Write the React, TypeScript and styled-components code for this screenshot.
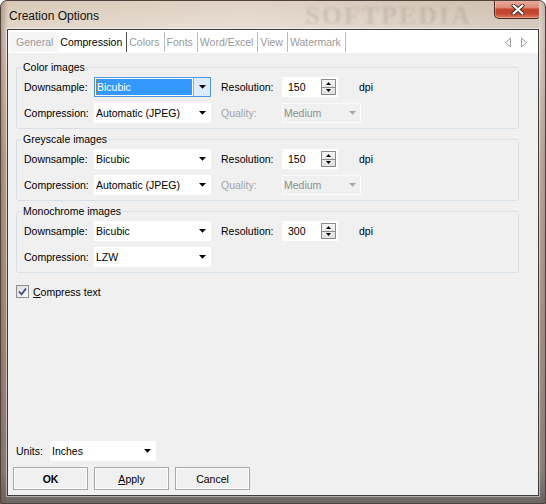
import styled, { createGlobalStyle } from "styled-components";

const GlobalStyle = createGlobalStyle`
    html, body {
        margin: 0;
        padding: 0;
        background: #ffffff;
    }
    body {
        font-family: "Liberation Sans", Arial, sans-serif;
        font-size: 10.5px;
        color: #000;
    }
`

const Window = styled.div`
    width: 546px;
    height: 504px;
    box-sizing: border-box;
    display: flex;
    flex-direction: column;
    padding: 0 6px 7px 6px;
    border: 1px solid #4d433c;
    border-radius: 7px 7px 0 0;
    overflow: hidden;
    background:
        linear-gradient(90deg, rgba(110, 70, 50, 0.4) 0px, rgba(110, 70, 50, 0) 7px, rgba(0, 0, 0, 0) 538px, rgba(70, 70, 70, 0.25) 546px),
        linear-gradient(180deg, #d9c8b7 0px, #e3d7ca 28px, #c4ad9c 160px, #ad9585 330px, #8e8782 470px, #6a6663 504px);
`

const TitleBar = styled.div`
    height: 28px;
    display: flex;
    align-items: flex-start;
    overflow: hidden;
    background: linear-gradient(90deg, rgba(255, 255, 255, 0) 0%, rgba(255, 255, 255, 0.2) 45%, rgba(120, 115, 110, 0.12) 100%);
`

const Title = styled.div`
    margin: 8px 0 0 2px;
    font-size: 12px;
    line-height: 14px;
    color: #111;
`

const Watermark = styled.div`
    margin: 3px 22px 0 auto;
    font-family: "Liberation Serif", serif;
    font-weight: bold;
    font-size: 26px;
    line-height: 24px;
    letter-spacing: 2px;
    color: rgba(95, 85, 75, 0.15);
    filter: blur(1.2px);
    white-space: nowrap;
`

const CloseButton = styled.div`
    width: 47px;
    height: 19px;
    box-sizing: border-box;
    margin: -1px -2px 0 0;
    border: 1px solid #4a2720;
    border-top: none;
    border-radius: 0 0 5px 5px;
    background: linear-gradient(180deg, #eab0a2 0%, #dc8a76 42%, #c2442b 52%, #c34b33 78%, #e07b5e 100%);
    box-shadow: inset 0 0 0 1px rgba(255, 255, 255, 0.3);
    display: flex;
    align-items: center;
    justify-content: center;
    flex-shrink: 0;
`

const Client = styled.div`
    flex: 1;
    min-height: 0;
    display: flex;
    flex-direction: column;
    background: #f0f0f0;
    border: 1px solid #3d3d3d;
    box-shadow: 0 0 0 1px rgba(255, 255, 255, 0.45);
`

const TabStrip = styled.div`
    height: 23px;
    box-sizing: border-box;
    padding: 2px 10px 1px 2px;
    background: #ffffff;
    display: flex;
    align-items: stretch;
`

const Tab = styled.div<{ $active?: boolean; $first?: boolean }>`
    display: flex;
    align-items: center;
    padding: ${({ $first }) => ($first ? "0 5px 0 6px" : "0 4px 0 2px")};
    background: ${({ $first }) => ($first ? "#f5f5f5" : "#ffffff")};
    color: ${({ $active }) => ($active ? "#000" : "#9a9a9a")};
    border-right: ${({ $first, $active }) =>
        $first ? "none" : $active ? "1px solid #4a4a4a" : "1px solid #bcbcbc"};
    white-space: nowrap;
`

const TabArrows = styled.div`
    margin-left: auto;
    display: flex;
    align-items: center;
`

const Content = styled.div`
    flex: 1;
    display: flex;
    flex-direction: column;
    gap: 4px;
    padding: 8px 19px 0 8px;
`

const Group = styled.fieldset`
    margin: 0;
    padding: 3px 0 5px 7px;
    border: 1px solid #d5dfe5;
    border-radius: 3px;
    display: flex;
    flex-direction: column;
    gap: 6px;
    min-width: 0;
`

const GroupTitle = styled.legend`
    margin-left: -2px;
    padding: 0 1px;
    font-size: 10.5px;
    line-height: 13px;
`

const Row = styled.div`
    height: 20px;
    display: flex;
    align-items: center;
`

const FieldLabel = styled.span<{ $w: number; $gap?: number; $disabled?: boolean }>`
    width: ${({ $w }) => $w}px;
    margin-left: ${({ $gap }) => $gap ?? 0}px;
    flex-shrink: 0;
    color: ${({ $disabled }) => ($disabled ? "#a3a3a3" : "#000")};
    white-space: nowrap;
`

const ComboBox = styled.div<{ $w: number; $focused?: boolean; $disabled?: boolean }>`
    width: ${({ $w }) => $w}px;
    height: 20px;
    box-sizing: border-box;
    display: flex;
    flex-shrink: 0;
    background: ${({ $disabled }) => ($disabled ? "#f0f0f0" : "#ffffff")};
    border: 1px solid ${({ $focused, $disabled }) =>
        $focused ? "#4d97e2" : $disabled ? "#fbfbfb" : "#ffffff"};
    color: ${({ $disabled }) => ($disabled ? "#8e8e8e" : "#000")};
`

const ComboText = styled.div<{ $focused?: boolean }>`
    flex: 1;
    display: flex;
    align-items: center;
    padding-left: 1px;
    margin: ${({ $focused }) => ($focused ? "1px 0 1px 1px" : "0")};
    background: ${({ $focused }) => ($focused ? "#3399ff" : "transparent")};
    color: ${({ $focused }) => ($focused ? "#fff" : "inherit")};
    outline: ${({ $focused }) => ($focused ? "1px dotted #c07a20" : "none")};
    outline-offset: -1px;
    white-space: nowrap;
    overflow: hidden;
`

const ComboButton = styled.div<{ $focused?: boolean }>`
    width: 16px;
    flex-shrink: 0;
    display: flex;
    align-items: center;
    justify-content: center;
    margin-left: ${({ $focused }) => ($focused ? "1px" : "0")};
    background: ${({ $focused }) => ($focused ? "#dcecfc" : "transparent")};
    border-left: 1px solid ${({ $focused }) => ($focused ? "#7eb4ea" : "transparent")};
`

const SpinBox = styled.div`
    width: 56px;
    height: 20px;
    box-sizing: border-box;
    display: flex;
    align-items: center;
    padding: 0 2px 0 6px;
    background: #ffffff;
    flex-shrink: 0;
`

const SpinValue = styled.div`
    flex: 1;
`

const SpinButtons = styled.div`
    width: 15px;
    height: 16px;
    box-sizing: border-box;
    display: flex;
    flex-direction: column;
    border: 1px solid #8a8a8a;
    background: linear-gradient(180deg, #f6f6f6, #e2e2e2);
`

const SpinHalf = styled.div<{ $top?: boolean }>`
    flex: 1;
    display: flex;
    align-items: center;
    justify-content: center;
    border-bottom: ${({ $top }) => ($top ? "1px solid #8a8a8a" : "none")};
`

const Unit = styled.span`
    margin-left: 21px;
`

const CheckRow = styled.label`
    margin-top: 8px;
    display: flex;
    align-items: center;
    gap: 4px;
`

const CheckBox = styled.div`
    width: 13px;
    height: 13px;
    box-sizing: border-box;
    border: 1px solid #8e8f8f;
    background: linear-gradient(135deg, #dcdcdc, #fbfbfb);
    display: flex;
    align-items: center;
    justify-content: center;
`

const Footer = styled.div`
    display: flex;
    flex-direction: column;
    gap: 6px;
    padding: 0 0 5px 5px;
`

const UnitsRow = styled(Row)`
    margin-left: 3px;
`

const ButtonRow = styled.div`
    display: flex;
    gap: 6px;
`

const Button = styled.div<{ $default?: boolean }>`
    width: 75px;
    height: 23px;
    box-sizing: border-box;
    display: flex;
    align-items: center;
    justify-content: center;
    border: 1px solid #a8a8a8;
    background: #f0f0f0;
    box-shadow: inset 0 0 0 1px #fafafa;
    font-weight: ${({ $default }) => ($default ? "bold" : "normal")};
`

const Arrow = ({ color = "#000" }: { color?: string }) => (
    <svg width="7" height="4" viewBox="0 0 7 4">
        <polygon points="0,0 7,0 3.5,3.8" fill={color} />
    </svg>
)

const SmallArrow = ({ up }: { up?: boolean }) => (
    <svg width="5" height="3" viewBox="0 0 5 3">
        <polygon points={up ? "0,3 5,3 2.5,0" : "0,0 5,0 2.5,3"} fill="#000" />
    </svg>
)

interface ComboProps {
    value: string;
    width: number;
    focused?: boolean;
    disabled?: boolean;
}

const Combo = ({ value, width, focused, disabled }: ComboProps) => (
    <ComboBox $w={width} $focused={focused} $disabled={disabled}>
        <ComboText $focused={focused}>{value}</ComboText>
        <ComboButton $focused={focused}>
            <Arrow color={disabled ? "#a8a8a8" : "#000"} />
        </ComboButton>
    </ComboBox>
)

const Spin = ({ value }: { value: string }) => (
    <SpinBox>
        <SpinValue>{value}</SpinValue>
        <SpinButtons>
            <SpinHalf $top><SmallArrow up /></SpinHalf>
            <SpinHalf><SmallArrow /></SpinHalf>
        </SpinButtons>
    </SpinBox>
)

interface ImageGroupProps {
    title: string;
    resolution: string;
    compression: string;
    quality?: boolean;
    downsampleFocused?: boolean;
}

const ImageGroup = ({ title, resolution, compression, quality, downsampleFocused }: ImageGroupProps) => (
    <Group>
        <GroupTitle>{title}</GroupTitle>
        <Row>
            <FieldLabel $w={70}>Downsample:</FieldLabel>
            <Combo value="Bicubic" width={117} focused={downsampleFocused} />
            <FieldLabel $w={61} $gap={10}>Resolution:</FieldLabel>
            <Spin value={resolution} />
            <Unit>dpi</Unit>
        </Row>
        <Row>
            <FieldLabel $w={70}>Compression:</FieldLabel>
            <Combo value={compression} width={117} />
            {quality && <>
                <FieldLabel $w={61} $gap={10} $disabled>Quality:</FieldLabel>
                <Combo value="Medium" width={79} disabled />
            </>}
        </Row>
    </Group>
)

const tabs = ["General", "Compression", "Colors", "Fonts", "Word/Excel", "View", "Watermark"];

const App = () => {
    return <>
        <GlobalStyle />
        <Window>
            <TitleBar>
                <Title>Creation Options</Title>
                <Watermark>SOFTPEDIA</Watermark>
                <CloseButton>
                    <svg width="14" height="11" viewBox="0 0 14 11">
                        <path d="M2.5 1.5 L11.5 9.5 M11.5 1.5 L2.5 9.5" stroke="#3a2a26" strokeWidth="4" strokeLinecap="round" />
                        <path d="M2.5 1.5 L11.5 9.5 M11.5 1.5 L2.5 9.5" stroke="#ffffff" strokeWidth="2.2" strokeLinecap="round" />
                    </svg>
                </CloseButton>
            </TitleBar>
            <Client>
                <TabStrip>
                    {tabs.map((t, i) => (
                        <Tab key={t} $first={i === 0} $active={i === 1}>{t}</Tab>
                    ))}
                    <TabArrows>
                        <svg width="24" height="11" viewBox="0 0 24 11">
                            <path d="M6.5 1 L1.5 5.5 L6.5 10 Z" fill="none" stroke="#a0a0a0" />
                            <path d="M17.5 1 L22.5 5.5 L17.5 10 Z" fill="none" stroke="#a0a0a0" />
                        </svg>
                    </TabArrows>
                </TabStrip>
                <Content>
                    <ImageGroup title="Color images" resolution="150" compression="Automatic (JPEG)" quality downsampleFocused />
                    <ImageGroup title="Greyscale images" resolution="150" compression="Automatic (JPEG)" quality />
                    <ImageGroup title="Monochrome images" resolution="300" compression="LZW" />
                    <CheckRow>
                        <CheckBox>
                            <svg width="11" height="11" viewBox="0 0 11 11">
                                <path d="M2 5.5 L4.5 8.3 L9 2.5" fill="none" stroke="#3b4d7e" strokeWidth="1.8" />
                            </svg>
                        </CheckBox>
                        <span><u>C</u>ompress text</span>
                    </CheckRow>
                </Content>
                <Footer>
                    <UnitsRow>
                        <FieldLabel $w={34}>Units:</FieldLabel>
                        <Combo value="Inches" width={106} />
                    </UnitsRow>
                    <ButtonRow>
                        <Button $default>OK</Button>
                        <Button><span><u>A</u>pply</span></Button>
                        <Button>Cancel</Button>
                    </ButtonRow>
                </Footer>
            </Client>
        </Window>
    </>
}

export default App;
